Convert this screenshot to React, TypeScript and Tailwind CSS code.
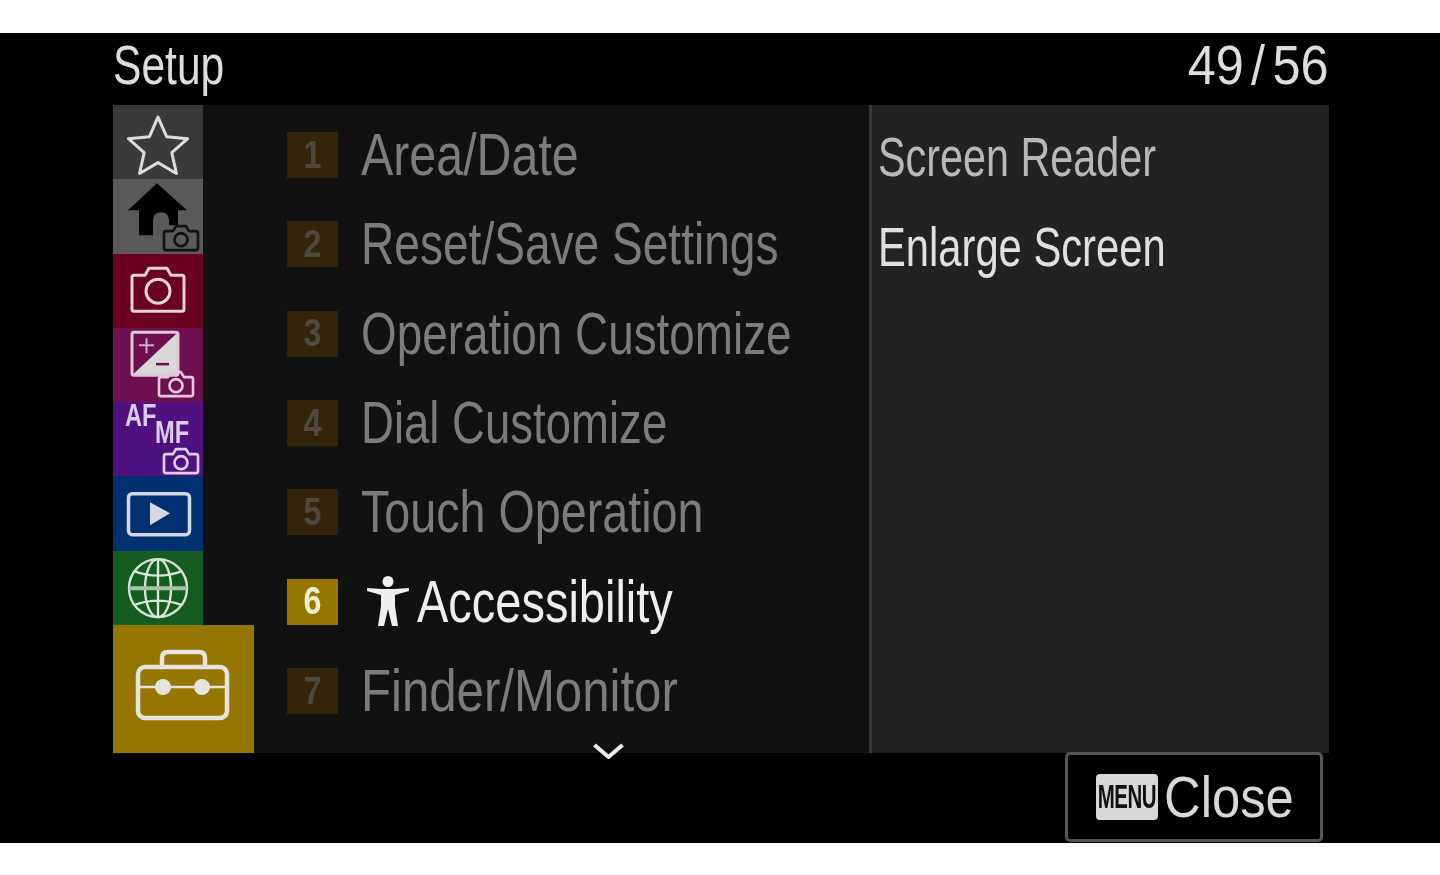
const rows = [
  { n: "1", label: "Area/Date", fit: "scale-x-[.806]" },
  { n: "2", label: "Reset/Save Settings", fit: "scale-x-[.768]" },
  { n: "3", label: "Operation Customize", fit: "scale-x-[.764]" },
  { n: "4", label: "Dial Customize", fit: "scale-x-[.759]" },
  { n: "5", label: "Touch Operation", fit: "scale-x-[.778]" },
  { n: "6", label: "Accessibility", fit: "scale-x-[.783]", active: true },
  { n: "7", label: "Finder/Monitor", fit: "scale-x-[.819]" },
];

// small camera, x/y is the top-left corner of a 36x28 box
function MiniCamera({ x, y, color }: { x: number; y: number; color: string }) {
  return (
    <g transform={`translate(${x} ${y})`} fill="none" stroke={color} strokeWidth="2.600" strokeLinejoin="round">
      <path d="M3 7h7l3-5h10l3 5h7q2 0 2 2v15q0 2-2 2H3q-2 0-2-2V9q0-2 2-2z" />
      <circle cx="18" cy="15.500" r="6.500" />
    </g>
  );
}

function Tile({ className, children }: { className: string; children: React.ReactNode }) {
  return (
    <div className={`h-[74.3px] w-[90px] ${className}`}>
      <svg viewBox="0 0 90 74" className="h-full w-full">
        {children}
      </svg>
    </div>
  );
}

function Sidebar() {
  return (
    <div className="flex w-[141px] shrink-0 flex-col bg-[#111111]">
      <Tile className="bg-[#3a3a3a]">
        <path
          d="M45 12l8.600 19.500 21 2-15.800 14 4.600 20.800L45 57.500 26.600 68.300l4.600-20.800-15.800-14 21-2z"
          fill="none"
          stroke="#dddddd"
          strokeWidth="3"
          strokeLinejoin="round"
        />
      </Tile>
      <Tile className="bg-[#5a5a5a]">
        <path d="M44 4l30 27H65v15H56V40q-1-7-8-7t-8 7v16H26V31H15z" fill="#000000" />
        <MiniCamera x={50} y={45} color="#111111" />
      </Tile>
      <Tile className="bg-[#6b0020]">
        <g fill="none" stroke="#e4d4da" strokeWidth="3" strokeLinejoin="round">
          <path d="M21 21h11l4-7h18l4 7h11q2 0 2 2v32q0 2-2 2H21q-2 0-2-2V23q0-2 2-2z" />
          <circle cx="45" cy="37" r="12" />
        </g>
      </Tile>
      <Tile className="bg-[#6e1050]">
        <path d="M65 4v43H19z" fill="#d8d8d8" />
        <rect x="19" y="4" width="46" height="43" rx="2" fill="none" stroke="#ddc8d8" strokeWidth="3" />
        <path d="M26 17h15M33.500 10v15" stroke="#d0b0c8" strokeWidth="2" />
        <path d="M43 36h13" stroke="#6e1050" strokeWidth="2.500" />
        <MiniCamera x={45} y={42} color="#e4c8dc" />
      </Tile>
      <div className="relative h-[74.3px] w-[90px] bg-[#4f1080]">
        <span className="absolute left-[12px] top-[-3px] origin-left scale-x-[.74] text-[32px] font-bold leading-[32px] text-[#dccbe6]">
          AF
        </span>
        <span className="absolute left-[42px] top-[14px] origin-left scale-x-[.74] text-[32px] font-bold leading-[32px] text-[#dccbe6]">
          MF
        </span>
        <svg viewBox="0 0 90 74" className="h-full w-full">
          <MiniCamera x={50} y={45} color="#e0cfe8" />
        </svg>
      </div>
      <Tile className="bg-[#003070]">
        <rect x="15.500" y="17.500" width="61" height="41" rx="4" fill="none" stroke="#d4d8e0" strokeWidth="3.500" />
        <path d="M37 26l20 11-20 12z" fill="#d4d8e0" />
      </Tile>
      <Tile className="bg-[#145c20]">
        <g fill="none" stroke="#d8e4d8" strokeWidth="2.400">
          <circle cx="45" cy="37" r="29" />
          <ellipse cx="45" cy="37" rx="13" ry="29" />
          <path d="M45 8v58M21 20q24 9 48 0M21 54q24-9 48 0" />
          <path d="M16 37h58" strokeWidth="4" stroke="#a8c4a8" />
        </g>
      </Tile>
      <div className="h-[128px] w-[141px] bg-[#947600]">
        <svg viewBox="0 0 141 128" className="h-full w-full">
          <g fill="none" stroke="#e4e4e0" strokeWidth="4.500" strokeLinejoin="round">
            <rect x="25" y="42" width="89" height="51" rx="7" />
            <path d="M49 42V33q0-6 6-6h31q6 0 6 6v9" />
            <path d="M25 62h89" strokeWidth="2.500" />
          </g>
          <circle cx="50" cy="62" r="8" fill="#e4e4e0" />
          <circle cx="89" cy="62" r="8" fill="#e4e4e0" />
        </svg>
      </div>
    </div>
  );
}

function AccessIcon() {
  return (
    <svg viewBox="0 0 42 50" className="-mt-[2px] mr-[8px] h-[50px] w-[42px] shrink-0">
      <circle cx="21" cy="5.500" r="5.500" fill="#eeeeee" />
      <path d="M0 12l15 1h12l15-1v3l-14 4v11l3 20h-6l-4-17-4 17h-6l3-20V19L0 15z" fill="#eeeeee" />
    </svg>
  );
}

function Row({ n, label, fit, active }: { n: string; label: string; fit: string; active?: boolean }) {
  return (
    <div className="flex h-[89.33px] items-center">
      <div
        className={`flex h-[46px] w-[51px] shrink-0 items-center justify-center text-[38px] font-bold ${
          active ? "bg-[#947600] text-[#eeeecc]" : "bg-[#33240a] text-[#4c4a40]"
        }`}
      >
        <span className="scale-x-[.85]">{n}</span>
      </div>
      <div className={`flex items-center ${active ? "ml-[29px]" : "ml-[23px]"}`}>
        {active && <AccessIcon />}
        <span
          className={`origin-left whitespace-nowrap text-[60px] leading-none ${fit} ${
            active ? "text-[#eeeeee]" : "text-[#7c7c7c]"
          }`}
        >
          {label}
        </span>
      </div>
    </div>
  );
}

export default function App() {
  return (
    <div className="h-[875px] overflow-hidden bg-white pt-[33px] font-['Liberation_Sans',sans-serif]">
      <div className="flex h-[810px] flex-col bg-black pl-[113px] pr-[111px] blur-[0.4px]">
        <div className="flex h-[72px] items-center justify-between pb-[8px] text-[56px] leading-none text-[#dddddd]">
          <span className="origin-left scale-x-[.76]">Setup</span>
          <span className="flex origin-right scale-x-[.9]">
            49<span className="w-[32px] text-center">/</span>56
          </span>
        </div>

        <div className="flex h-[648px]">
          <Sidebar />
          <div className="relative w-[615px] shrink-0 bg-[#111111] pl-[33px] pt-[5.5px]">
            {rows.map((r) => (
              <Row key={r.n} n={r.n} label={r.label} fit={r.fit} active={r.active} />
            ))}
            <svg viewBox="0 0 32 16" className="absolute bottom-[-6px] left-[338px] h-[16px] w-[33px]">
              <path d="M2 2l14 12L30 2" fill="none" stroke="#eeeeee" strokeWidth="4" />
            </svg>
          </div>
          <div className="w-[3px] shrink-0 bg-[#3a3a3a]" />
          <div className="flex-1 bg-[#222222] pl-[6px] pt-[7px] text-[56px] leading-none">
            <div className="flex h-[90px] items-center">
              <span className="origin-left scale-x-[.738] whitespace-nowrap text-[#b8b8b8]">Screen Reader</span>
            </div>
            <div className="flex h-[90px] items-center">
              <span className="origin-left scale-x-[.745] whitespace-nowrap text-[#e0e0e0]">Enlarge Screen</span>
            </div>
          </div>
        </div>

        <div className="flex flex-1 justify-end pr-[6px]">
          <div className="-mt-[1px] flex h-[90px] w-[258px] items-center rounded-[5px] border-[3px] border-[#555555] pl-[28px]">
            <div className="flex h-[46px] w-[62px] items-center justify-center rounded-[4px] bg-[#d8d8d8] text-[33px] font-bold text-[#111111]">
              <span className="scale-x-[.62] tracking-tight">MENU</span>
            </div>
            <span className="ml-[6px] origin-left scale-x-[.875] text-[58px] leading-none text-[#d8d8d8]">Close</span>
          </div>
        </div>
      </div>
    </div>
  );
}
